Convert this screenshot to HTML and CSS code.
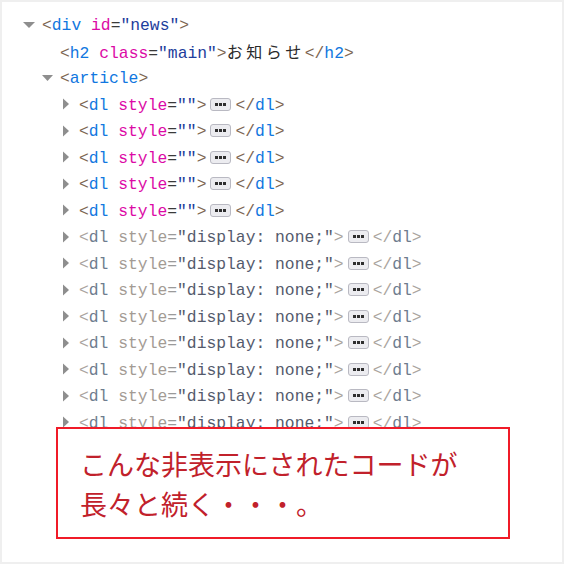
FILE: index.html
```html
<!DOCTYPE html>
<html lang="ja">
<head>
<meta charset="utf-8">
<title>news</title>
<link rel="stylesheet" href="styles.css">
</head>
<body>
<div class="panel">
  <div class="tree">
    <div class="row lvl0">
      <span class="twisty"><svg width="19" height="12" viewBox="0 0 19 12"><polygon class="tri" points="0,3 12,3 6,9"/></svg></span>
      <span class="code"><span class="br">&lt;</span><span class="tag">div</span> <span class="an">id</span><span class="eq">=</span><span class="av">"news"</span><span class="br">&gt;</span></span>
    </div>
    <div class="row lvl1">
      <span class="twisty"></span>
      <span class="code"><span class="br">&lt;</span><span class="tag">h2</span> <span class="an">class</span><span class="eq">=</span><span class="av">"main"</span><span class="br">&gt;</span><span class="jp">お知らせ</span><span class="br">&lt;/</span><span class="tag">h2</span><span class="br">&gt;</span></span>
    </div>
    <div class="row lvl1">
      <span class="twisty"><svg width="19" height="12" viewBox="0 0 19 12"><polygon class="tri" points="1,3 12,3 6.5,9"/></svg></span>
      <span class="code"><span class="br">&lt;</span><span class="tag">article</span><span class="br">&gt;</span></span>
    </div>

    <div class="row lvl2">
      <span class="twisty"><svg width="19" height="12" viewBox="0 0 19 12"><polygon class="tri" points="3,0.5 9,6 3,11.5"/></svg></span>
      <span class="code"><span class="br">&lt;</span><span class="tag">dl</span> <span class="an">style</span><span class="eq">=</span><span class="av">""</span><span class="br">&gt;</span><span class="more"><i></i><i></i><i></i></span><span class="br">&lt;/</span><span class="tag">dl</span><span class="br">&gt;</span></span>
    </div>
    <div class="row lvl2">
      <span class="twisty"><svg width="19" height="12" viewBox="0 0 19 12"><polygon class="tri" points="3,0.5 9,6 3,11.5"/></svg></span>
      <span class="code"><span class="br">&lt;</span><span class="tag">dl</span> <span class="an">style</span><span class="eq">=</span><span class="av">""</span><span class="br">&gt;</span><span class="more"><i></i><i></i><i></i></span><span class="br">&lt;/</span><span class="tag">dl</span><span class="br">&gt;</span></span>
    </div>
    <div class="row lvl2">
      <span class="twisty"><svg width="19" height="12" viewBox="0 0 19 12"><polygon class="tri" points="3,0.5 9,6 3,11.5"/></svg></span>
      <span class="code"><span class="br">&lt;</span><span class="tag">dl</span> <span class="an">style</span><span class="eq">=</span><span class="av">""</span><span class="br">&gt;</span><span class="more"><i></i><i></i><i></i></span><span class="br">&lt;/</span><span class="tag">dl</span><span class="br">&gt;</span></span>
    </div>
    <div class="row lvl2">
      <span class="twisty"><svg width="19" height="12" viewBox="0 0 19 12"><polygon class="tri" points="3,0.5 9,6 3,11.5"/></svg></span>
      <span class="code"><span class="br">&lt;</span><span class="tag">dl</span> <span class="an">style</span><span class="eq">=</span><span class="av">""</span><span class="br">&gt;</span><span class="more"><i></i><i></i><i></i></span><span class="br">&lt;/</span><span class="tag">dl</span><span class="br">&gt;</span></span>
    </div>
    <div class="row lvl2">
      <span class="twisty"><svg width="19" height="12" viewBox="0 0 19 12"><polygon class="tri" points="3,0.5 9,6 3,11.5"/></svg></span>
      <span class="code"><span class="br">&lt;</span><span class="tag">dl</span> <span class="an">style</span><span class="eq">=</span><span class="av">""</span><span class="br">&gt;</span><span class="more"><i></i><i></i><i></i></span><span class="br">&lt;/</span><span class="tag">dl</span><span class="br">&gt;</span></span>
    </div>

    <div class="row lvl2 dim">
      <span class="twisty"><svg width="19" height="12" viewBox="0 0 19 12"><polygon class="tri" points="3,0.5 9,6 3,11.5"/></svg></span>
      <span class="code"><span class="br">&lt;</span><span class="tag">dl</span> <span class="an">style</span><span class="eq">=</span><span class="av">"display: none;"</span><span class="br">&gt;</span><span class="more"><i></i><i></i><i></i></span><span class="br">&lt;/</span><span class="tag">dl</span><span class="br">&gt;</span></span>
    </div>
    <div class="row lvl2 dim">
      <span class="twisty"><svg width="19" height="12" viewBox="0 0 19 12"><polygon class="tri" points="3,0.5 9,6 3,11.5"/></svg></span>
      <span class="code"><span class="br">&lt;</span><span class="tag">dl</span> <span class="an">style</span><span class="eq">=</span><span class="av">"display: none;"</span><span class="br">&gt;</span><span class="more"><i></i><i></i><i></i></span><span class="br">&lt;/</span><span class="tag">dl</span><span class="br">&gt;</span></span>
    </div>
    <div class="row lvl2 dim">
      <span class="twisty"><svg width="19" height="12" viewBox="0 0 19 12"><polygon class="tri" points="3,0.5 9,6 3,11.5"/></svg></span>
      <span class="code"><span class="br">&lt;</span><span class="tag">dl</span> <span class="an">style</span><span class="eq">=</span><span class="av">"display: none;"</span><span class="br">&gt;</span><span class="more"><i></i><i></i><i></i></span><span class="br">&lt;/</span><span class="tag">dl</span><span class="br">&gt;</span></span>
    </div>
    <div class="row lvl2 dim">
      <span class="twisty"><svg width="19" height="12" viewBox="0 0 19 12"><polygon class="tri" points="3,0.5 9,6 3,11.5"/></svg></span>
      <span class="code"><span class="br">&lt;</span><span class="tag">dl</span> <span class="an">style</span><span class="eq">=</span><span class="av">"display: none;"</span><span class="br">&gt;</span><span class="more"><i></i><i></i><i></i></span><span class="br">&lt;/</span><span class="tag">dl</span><span class="br">&gt;</span></span>
    </div>
    <div class="row lvl2 dim">
      <span class="twisty"><svg width="19" height="12" viewBox="0 0 19 12"><polygon class="tri" points="3,0.5 9,6 3,11.5"/></svg></span>
      <span class="code"><span class="br">&lt;</span><span class="tag">dl</span> <span class="an">style</span><span class="eq">=</span><span class="av">"display: none;"</span><span class="br">&gt;</span><span class="more"><i></i><i></i><i></i></span><span class="br">&lt;/</span><span class="tag">dl</span><span class="br">&gt;</span></span>
    </div>
    <div class="row lvl2 dim">
      <span class="twisty"><svg width="19" height="12" viewBox="0 0 19 12"><polygon class="tri" points="3,0.5 9,6 3,11.5"/></svg></span>
      <span class="code"><span class="br">&lt;</span><span class="tag">dl</span> <span class="an">style</span><span class="eq">=</span><span class="av">"display: none;"</span><span class="br">&gt;</span><span class="more"><i></i><i></i><i></i></span><span class="br">&lt;/</span><span class="tag">dl</span><span class="br">&gt;</span></span>
    </div>
    <div class="row lvl2 dim">
      <span class="twisty"><svg width="19" height="12" viewBox="0 0 19 12"><polygon class="tri" points="3,0.5 9,6 3,11.5"/></svg></span>
      <span class="code"><span class="br">&lt;</span><span class="tag">dl</span> <span class="an">style</span><span class="eq">=</span><span class="av">"display: none;"</span><span class="br">&gt;</span><span class="more"><i></i><i></i><i></i></span><span class="br">&lt;/</span><span class="tag">dl</span><span class="br">&gt;</span></span>
    </div>
    <div class="row lvl2 dim">
      <span class="twisty"><svg width="19" height="12" viewBox="0 0 19 12"><polygon class="tri" points="3,0.5 9,6 3,11.5"/></svg></span>
      <span class="code"><span class="br">&lt;</span><span class="tag">dl</span> <span class="an">style</span><span class="eq">=</span><span class="av">"display: none;"</span><span class="br">&gt;</span><span class="more"><i></i><i></i><i></i></span><span class="br">&lt;/</span><span class="tag">dl</span><span class="br">&gt;</span></span>
    </div>
  </div>

  <div class="note">
    <p>こんな非表示にされたコードが<br>長々と続く・・・。</p>
  </div>
</div>
</body>
</html>
```

FILE: styles.css
```css
html {
  background: #efefef;
}
body {
  margin: 0;
}
.panel {
  position: relative;
  margin: 2px;
  height: 560px;
  background: #ffffff;
  box-sizing: border-box;
  padding-top: 11px;
  overflow: hidden;
}
.tree {
  display: flex;
  flex-direction: column;
}
.row {
  display: flex;
  align-items: center;
  height: 26.5px;
  white-space: pre;
}
.lvl0 { padding-left: 21px; }
.lvl1 { padding-left: 39px; }
.lvl2 { padding-left: 58px; }

.twisty {
  flex: none;
  width: 19px;
  height: 12px;
  margin-top: -3px;
}
.twisty svg {
  display: block;
}
.tri {
  fill: #8e8e8e;
}

.code {
  font-family: "Liberation Mono", "DejaVu Sans Mono", monospace;
  font-size: 16.33px;
  line-height: 26.5px;
  color: #333;
}
.br { color: #7d6652; }
.tag { color: #1177e0; }
.an { color: #dc0aa6; }
.eq { color: #3a3a3a; }
.av { color: #1d3d9c; }
.jp {
  font-family: "Noto Sans CJK JP", sans-serif;
  font-size: 16px;
  letter-spacing: 3.6px;
  color: #2a2a2a;
}

.dim .br { color: #aaa49e; }
.dim .tag { color: #6e7c8e; }
.dim .an { color: #a39b94; }
.dim .eq { color: #9a9a9a; }
.dim .av { color: #545a6c; }

.more {
  display: inline-flex;
  align-items: center;
  justify-content: center;
  gap: 1px;
  box-sizing: border-box;
  width: 21px;
  height: 13px;
  margin: 0 4px;
  vertical-align: middle;
  position: relative;
  top: -1px;
  border: 1px solid #b9b9c2;
  border-radius: 3px;
  background: #ececf0;
}
.more i {
  display: block;
  width: 3px;
  height: 3px;
  background: #2e2e2e;
}

.note {
  position: absolute;
  left: 54px;
  top: 425px;
  width: 454px;
  height: 112px;
  box-sizing: border-box;
  border: 2px solid #f01b28;
  background: #ffffff;
  padding: 15px 0 0 22px;
}
.note p {
  margin: 0;
  font-family: "Noto Sans CJK JP", sans-serif;
  font-size: 27px;
  line-height: 40px;
  color: #c1212b;
}
```
